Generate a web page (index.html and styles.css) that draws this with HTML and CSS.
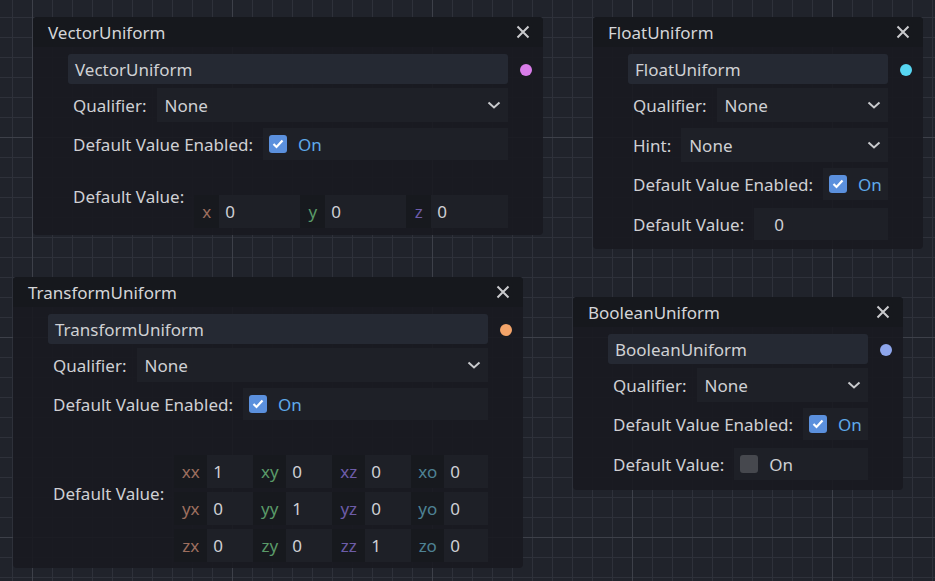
FILE: index.html
```html
<!DOCTYPE html>
<html>
<head>
<meta charset="utf-8">
<link rel="stylesheet" href="styles.css">
</head>
<body>
<div class="canvas">

  <!-- VectorUniform -->
  <div class="node node-vector">
    <div class="title"><span>VectorUniform</span>
      <svg class="close" width="14" height="14" viewBox="0 0 14 14"><path d="M1.5 1.5 L12.5 12.5 M12.5 1.5 L1.5 12.5"/></svg>
    </div>
    <div class="body">
      <div class="name-row">
        <div class="name-field">VectorUniform</div>
        <span class="port port-pink"></span>
      </div>
      <div class="row row-drop">
        <span class="lbl">Qualifier:</span>
        <div class="dropdown"><span>None</span><svg class="chev" width="14" height="8" viewBox="0 0 14 8"><path d="M1.5 1.5 L7 6.5 L12.5 1.5"/></svg></div>
      </div>
      <div class="row row-check">
        <span class="lbl">Default Value Enabled:</span>
        <div class="checkwrap"><span class="box on"><svg width="12" height="10" viewBox="0 0 12 10"><path d="M1.5 5 L4.5 8 L10.5 1.5"/></svg></span><span class="on-text">On</span></div>
      </div>
      <div class="row row-multi">
        <span class="lbl">Default Value:</span>
        <div class="vec-fields">
          <div class="vf"><span class="ax ax-x">x</span><span class="val">0</span></div>
          <div class="vf"><span class="ax ax-y">y</span><span class="val">0</span></div>
          <div class="vf vf-last"><span class="ax ax-z">z</span><span class="val">0</span></div>
        </div>
      </div>
    </div>
  </div>

  <!-- FloatUniform -->
  <div class="node node-float">
    <div class="title"><span>FloatUniform</span>
      <svg class="close" width="14" height="14" viewBox="0 0 14 14"><path d="M1.5 1.5 L12.5 12.5 M12.5 1.5 L1.5 12.5"/></svg>
    </div>
    <div class="body">
      <div class="name-row">
        <div class="name-field">FloatUniform</div>
        <span class="port port-cyan"></span>
      </div>
      <div class="row row-drop">
        <span class="lbl">Qualifier:</span>
        <div class="dropdown"><span>None</span><svg class="chev" width="14" height="8" viewBox="0 0 14 8"><path d="M1.5 1.5 L7 6.5 L12.5 1.5"/></svg></div>
      </div>
      <div class="row row-drop row-hint">
        <span class="lbl">Hint:</span>
        <div class="dropdown"><span>None</span><svg class="chev" width="14" height="8" viewBox="0 0 14 8"><path d="M1.5 1.5 L7 6.5 L12.5 1.5"/></svg></div>
      </div>
      <div class="row row-check">
        <span class="lbl">Default Value Enabled:</span>
        <div class="checkwrap"><span class="box on"><svg width="12" height="10" viewBox="0 0 12 10"><path d="M1.5 5 L4.5 8 L10.5 1.5"/></svg></span><span class="on-text">On</span></div>
      </div>
      <div class="row row-value">
        <span class="lbl">Default Value:</span>
        <div class="spin"><span>0</span></div>
      </div>
    </div>
  </div>

  <!-- TransformUniform -->
  <div class="node node-transform">
    <div class="title"><span>TransformUniform</span>
      <svg class="close" width="14" height="14" viewBox="0 0 14 14"><path d="M1.5 1.5 L12.5 12.5 M12.5 1.5 L1.5 12.5"/></svg>
    </div>
    <div class="body">
      <div class="name-row">
        <div class="name-field">TransformUniform</div>
        <span class="port port-orange"></span>
      </div>
      <div class="row row-drop">
        <span class="lbl">Qualifier:</span>
        <div class="dropdown"><span>None</span><svg class="chev" width="14" height="8" viewBox="0 0 14 8"><path d="M1.5 1.5 L7 6.5 L12.5 1.5"/></svg></div>
      </div>
      <div class="row row-check">
        <span class="lbl">Default Value Enabled:</span>
        <div class="checkwrap"><span class="box on"><svg width="12" height="10" viewBox="0 0 12 10"><path d="M1.5 5 L4.5 8 L10.5 1.5"/></svg></span><span class="on-text">On</span></div>
      </div>
      <div class="row row-multi">
        <span class="lbl">Default Value:</span>
        <div class="mat-fields">
          <div class="mf"><span class="ax ax-x">xx</span><span class="val">1</span></div>
          <div class="mf"><span class="ax ax-y">xy</span><span class="val">0</span></div>
          <div class="mf"><span class="ax ax-z">xz</span><span class="val">0</span></div>
          <div class="mf mf-last"><span class="ax ax-o">xo</span><span class="val">0</span></div>
          <div class="mf"><span class="ax ax-x">yx</span><span class="val">0</span></div>
          <div class="mf"><span class="ax ax-y">yy</span><span class="val">1</span></div>
          <div class="mf"><span class="ax ax-z">yz</span><span class="val">0</span></div>
          <div class="mf mf-last"><span class="ax ax-o">yo</span><span class="val">0</span></div>
          <div class="mf"><span class="ax ax-x">zx</span><span class="val">0</span></div>
          <div class="mf"><span class="ax ax-y">zy</span><span class="val">0</span></div>
          <div class="mf"><span class="ax ax-z">zz</span><span class="val">1</span></div>
          <div class="mf mf-last"><span class="ax ax-o">zo</span><span class="val">0</span></div>
        </div>
      </div>
    </div>
  </div>

  <!-- BooleanUniform -->
  <div class="node node-bool">
    <div class="title"><span>BooleanUniform</span>
      <svg class="close" width="14" height="14" viewBox="0 0 14 14"><path d="M1.5 1.5 L12.5 12.5 M12.5 1.5 L1.5 12.5"/></svg>
    </div>
    <div class="body">
      <div class="name-row">
        <div class="name-field">BooleanUniform</div>
        <span class="port port-lav"></span>
      </div>
      <div class="row row-drop">
        <span class="lbl">Qualifier:</span>
        <div class="dropdown"><span>None</span><svg class="chev" width="14" height="8" viewBox="0 0 14 8"><path d="M1.5 1.5 L7 6.5 L12.5 1.5"/></svg></div>
      </div>
      <div class="row row-check">
        <span class="lbl">Default Value Enabled:</span>
        <div class="checkwrap"><span class="box on"><svg width="12" height="10" viewBox="0 0 12 10"><path d="M1.5 5 L4.5 8 L10.5 1.5"/></svg></span><span class="on-text">On</span></div>
      </div>
      <div class="row row-value">
        <span class="lbl">Default Value:</span>
        <div class="checkwrap"><span class="box off"></span><span class="off-text">On</span></div>
      </div>
    </div>
  </div>

</div>
</body>
</html>
```

FILE: styles.css
```css
html, body {
  margin: 0;
  padding: 0;
}
body {
  width: 935px;
  height: 581px;
  overflow: hidden;
  font-family: "Noto Sans", "DejaVu Sans", sans-serif;
  font-size: 17px;
  color: #cfd0d4;
  background-color: #20232b;
  background-image:
    linear-gradient(to right, #3d4049 1px, transparent 1px),
    linear-gradient(to bottom, #3d4049 1px, transparent 1px),
    linear-gradient(to right, #2e313a 1px, transparent 1px),
    linear-gradient(to bottom, #2e313a 1px, transparent 1px);
  background-size: 200px 200px, 200px 200px, 20px 20px, 20px 20px;
  background-position: 32px 0, 0 137px, 12px 0, 0 17px;
}
.canvas {
  position: relative;
  width: 935px;
  height: 581px;
}
.node {
  position: absolute;
  background: rgba(24, 26, 32, 0.9);
  border-radius: 4px;
  padding-bottom: 7px;
}
.node-vector { left: 33px; top: 17px; width: 510px; }
.node-float { left: 593px; top: 17px; width: 330px; padding-bottom: 9px; }
.node-transform { left: 13px; top: 277px; width: 510px; padding-bottom: 6px; }
.node-bool { left: 573px; top: 297px; width: 330px; padding-bottom: 10px; }

.title {
  height: 30px;
  background: #16181d;
  border-radius: 4px 4px 0 0;
  display: flex;
  align-items: center;
  justify-content: space-between;
  padding: 0 13px 0 15px;
  color: #d4d5d8;
}
.close path {
  stroke: #c9cacd;
  stroke-width: 2;
  fill: none;
}
.body {
  padding: 7px 35px 0;
  display: flex;
  flex-direction: column;
  gap: 4px;
}
.name-row {
  position: relative;
  height: 30px;
}
.name-field {
  height: 30px;
  background: #252933;
  border-radius: 3px;
  padding-left: 7px;
  display: flex;
  align-items: center;
  color: #d0d1d4;
}
.port {
  position: absolute;
  right: -24px;
  top: 10px;
  width: 12px;
  height: 12px;
  border-radius: 50%;
}
.port-pink { background: #d97de9; }
.port-cyan { background: #57d6f2; }
.port-orange { background: #f3a46a; }
.port-lav { background: #8ea6ec; }

.row {
  display: flex;
  align-items: center;
  padding-left: 5px;
  gap: 10px;
}
.row-drop { height: 34px; }
.row-hint { margin-top: 2px; }
.row-check { height: 32px; margin-top: 2px; }
.row-value { height: 32px; margin-top: 4px; }
.lbl { white-space: nowrap; }

.dropdown {
  flex: 1;
  align-self: stretch;
  background: #1e2027;
  display: flex;
  align-items: center;
  justify-content: space-between;
  padding: 0 7px 0 8px;
}
.chev path {
  stroke: #c9cacd;
  stroke-width: 2;
  fill: none;
}
.checkwrap {
  flex: 1;
  align-self: stretch;
  background: #1e2027;
  display: flex;
  align-items: center;
  padding-left: 6px;
  gap: 11px;
}
.box {
  width: 18px;
  height: 18px;
  border-radius: 3px;
  display: flex;
  align-items: center;
  justify-content: center;
}
.box.on { background: #5b90dd; }
.box.on path {
  stroke: #ffffff;
  stroke-width: 2.2;
  fill: none;
}
.box.off { background: #46484e; }
.on-text { color: #5ea9ea; }
.off-text { color: #cfd0d4; }

.spin {
  flex: 1;
  align-self: stretch;
  background: #1e2027;
  display: flex;
  align-items: center;
  padding-left: 20px;
}

.row-multi {
  align-items: center;
}
.vec-fields {
  flex: 1;
  display: flex;
  margin-top: 31px;
}
.vf {
  display: flex;
  height: 33px;
  width: 106px;
}
.vf-last { width: auto; flex: 1; }
.vf .ax {
  width: 25px;
}
.ax {
  background: #17191e;
  display: flex;
  align-items: center;
  justify-content: center;
}
.val {
  flex: 1;
  background: #1e2027;
  display: flex;
  align-items: center;
  padding-left: 6px;
}
.ax-x { color: #9c6e5e; }
.ax-y { color: #5a9a68; }
.ax-z { color: #6d5ca8; }
.ax-o { color: #4e8294; }

.mat-fields {
  flex: 1;
  margin-top: 31px;
  display: grid;
  grid-template-columns: 79px 79px 79px 1fr;
  row-gap: 4px;
}
.mf {
  display: flex;
  height: 33px;
}
.mf .ax { width: 33px; }
```
